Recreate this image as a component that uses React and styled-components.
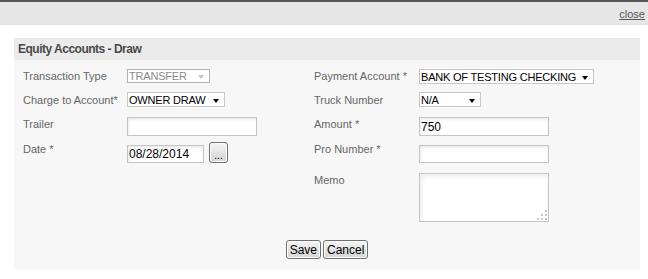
import React from "react";
import styled, { createGlobalStyle } from "styled-components";

const GlobalStyle = createGlobalStyle`
  html, body { margin: 0; padding: 0; background: #ffffff; }
  body { font-family: "Liberation Sans", Arial, sans-serif; }
  * { box-sizing: border-box; }
`;

const Page = styled.div`
  width: 648px;
  height: 279px;
  background: #fff;
`;

const TopBar = styled.div`
  height: 25px;
  border-top: 2px solid #575757;
  background: #e6e6e6;
  display: flex;
  justify-content: flex-end;
  align-items: center;
  padding: 1px 3px 0 0;
`;

const CloseLink = styled.a`
  font-size: 11px;
  color: #555;
  text-decoration: underline;
  cursor: pointer;
`;

const Content = styled.div`
  padding: 13px 8px 0 14px;
`;

const Panel = styled.section`
  width: 626px;
`;

const PanelHeader = styled.h2`
  margin: 0;
  height: 22px;
  background: #ebebeb;
  display: flex;
  align-items: center;
  padding: 0 0 1px 4px;
  font-family: "Liberation Sans", Arial, sans-serif;
  font-size: 12px;
  letter-spacing: -0.5px;
  font-weight: bold;
  color: #4a4a4a;
`;

const PanelBody = styled.div`
  background: #f7f7f7;
  padding: 9px 0 11px 9px;
`;

const FormGrid = styled.div`
  display: grid;
  grid-template-columns: 104px 187px 105px 1fr;
  grid-template-rows: 23px 25px 25px 31px auto;
  align-items: start;
`;

const Label = styled.label`
  font-size: 11px;
  line-height: 14px;
  color: #666;
  white-space: nowrap;
  margin-top: ${(p) => p.$dy || 0}px;
`;

const SelectBox = styled.div`
  width: ${(p) => p.$w}px;
  height: ${(p) => p.$h}px;
  border: 1px solid ${(p) => (p.$disabled ? "#b4b4b4" : "#c8c8c8")};
  background: #fff;
  display: flex;
  align-items: center;
  padding: 0 5px 0 1px;
  font-size: 11px;
  letter-spacing: -0.2px;
  color: ${(p) => (p.$disabled ? "#8a8a8a" : "#000")};
`;

const SelectText = styled.span`
  flex: 1;
  white-space: nowrap;
  overflow: hidden;
  line-height: 12px;
`;

const Arrow = styled.span`
  flex: none;
  width: 0;
  height: 0;
  align-self: flex-end;
  margin-bottom: 3px;
  border-left: 3.5px solid transparent;
  border-right: 3.5px solid transparent;
  border-top: 4px solid ${(p) => (p.$disabled ? "#c4c4c4" : "#000")};
`;

const TextInput = styled.input`
  width: ${(p) => p.$w}px;
  height: ${(p) => p.$h}px;
  margin: ${(p) => p.$mt || 0}px 0 0 0;
  border: 1px solid #c4c4c4;
  background: #fff;
  box-shadow: inset 1px 2px 3px rgba(0, 0, 0, 0.08);
  padding: 0 1px;
  font-family: "Liberation Sans", Arial, sans-serif;
  font-size: 12px;
  color: #000;
  outline: none;
`;

const DateGroup = styled.div`
  display: flex;
  align-items: center;
  gap: 5px;
`;

const Button = styled.button`
  height: ${(p) => p.$h || 19}px;
  width: ${(p) => (p.$w ? p.$w + "px" : "auto")};
  padding: 0 3px;
  border: 1px solid #707070;
  border-radius: 3px;
  background: linear-gradient(#f6f6f6, #e2e2e2 50%, #d6d6d6);
  box-shadow: inset 0 0 0 1px #fcfcfc;
  font-family: "Liberation Sans", Arial, sans-serif;
  font-size: 12px;
  line-height: 1;
  color: #000;
  cursor: pointer;
`;

const DotsButton = styled(Button)`
  padding: 6px 0 0 0;
  font-size: 10px;
`;

const MemoWrap = styled.div`
  position: relative;
  width: 130px;
  height: 49px;
`;

const MemoArea = styled.textarea`
  width: 130px;
  height: 49px;
  border: 1px solid #c4c4c4;
  background: #fff;
  box-shadow: inset 2px 3px 4px rgba(0, 0, 0, 0.07);
  resize: none;
  outline: none;
  display: block;
`;

const Grip = styled.svg`
  position: absolute;
  right: 2px;
  bottom: 2px;
`;

const ButtonRow = styled.div`
  display: flex;
  justify-content: center;
  gap: 2px;
  margin-top: 18px;
  padding-right: 9px;
`;

const Select = ({ w, h, value, disabled }) => (
  <SelectBox $w={w} $h={h} $disabled={disabled}>
    <SelectText>{value}</SelectText>
    <Arrow $disabled={disabled} />
  </SelectBox>
);

export default function App() {
  return (
    <Page>
      <GlobalStyle />
      <TopBar>
        <CloseLink>close</CloseLink>
      </TopBar>
      <Content>
        <Panel>
          <PanelHeader>Equity Accounts - Draw</PanelHeader>
          <PanelBody>
            <FormGrid>
              <Label>Transaction Type</Label>
              <Select w={83} h={14} value="TRANSFER" disabled />
              <Label>Payment Account *</Label>
              <Select w={175} h={15} value="BANK OF TESTING CHECKING" />

              <Label $dy={1}>Charge to Account*</Label>
              <Select w={98} h={15} value="OWNER DRAW" />
              <Label $dy={1}>Truck Number</Label>
              <Select w={62} h={15} value="N/A" />

              <Label>Trailer</Label>
              <TextInput $w={130} $h={19} defaultValue="" />
              <Label>Amount *</Label>
              <TextInput $w={130} $h={19} defaultValue="750" />

              <Label>Date *</Label>
              <DateGroup>
                <TextInput $w={77} $h={18} $mt={3} defaultValue="08/28/2014" />
                <DotsButton $w={19} $h={21}>...</DotsButton>
              </DateGroup>
              <Label>Pro Number *</Label>
              <TextInput $w={130} $h={18} $mt={3} defaultValue="" />

              <span />
              <span />
              <Label>Memo</Label>
              <MemoWrap>
                <MemoArea />
                <Grip width="10" height="10" viewBox="0 0 10 10">
                  <g fill="#c6c6c6">
                    <rect x="8" y="0" width="2" height="2" />
                    <rect x="4" y="4" width="2" height="2" />
                    <rect x="8" y="4" width="2" height="2" />
                    <rect x="0" y="8" width="2" height="2" />
                    <rect x="4" y="8" width="2" height="2" />
                    <rect x="8" y="8" width="2" height="2" />
                  </g>
                </Grip>
              </MemoWrap>
            </FormGrid>
            <ButtonRow>
              <Button>Save</Button>
              <Button>Cancel</Button>
            </ButtonRow>
          </PanelBody>
        </Panel>
      </Content>
    </Page>
  );
}
